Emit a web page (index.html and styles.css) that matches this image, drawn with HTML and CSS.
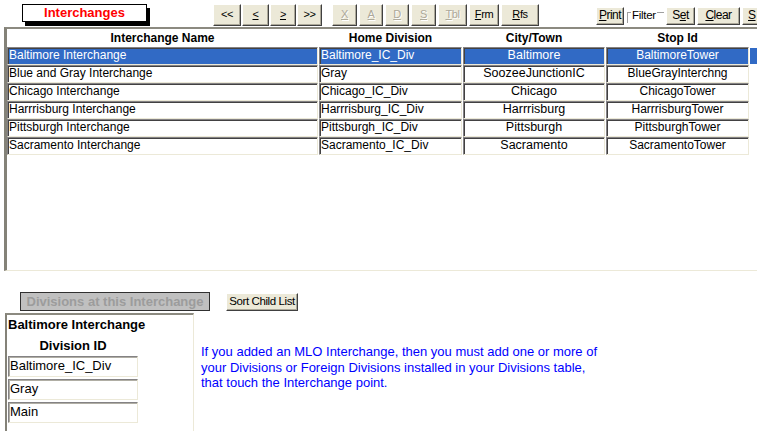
FILE: index.html
```html
<!DOCTYPE html>
<html>
<head>
<meta charset="utf-8">
<link rel="stylesheet" href="styles.css">
</head>
<body>
<div class="page">
  <div class="topbar">
    <div class="title">Interchanges</div>
    <div class="nav">
      <div class="btn w28">&lt;&lt;</div>
      <div class="btn w27"><u>&lt;</u></div>
      <div class="btn w26"><u>&gt;</u></div>
      <div class="btn w25">&gt;&gt;</div>
      <div class="btn dis w25 sep"><u>X</u></div>
      <div class="btn dis w24"><u>A</u></div>
      <div class="btn dis w24"><u>D</u></div>
      <div class="btn dis w25"><u>S</u></div>
      <div class="btn dis w29"><u>T</u>bl</div>
      <div class="btn w30"><u>F</u>rm</div>
      <div class="btn w38"><u>R</u>fs</div>
    </div>
    <div class="tools">
      <div class="btn small w28"><u>P</u>rint</div>
      <fieldset class="filter"><legend>Filter</legend></fieldset>
      <div class="btn small w29">S<u>e</u>t</div>
      <div class="btn small w43"><u>C</u>lear</div>
      <div class="btn small w30 left"><u>S</u></div>
    </div>
  </div>

  <div class="grid">
    <div class="head">Interchange Name</div>
    <div class="head">Home Division</div>
    <div class="head">City/Town</div>
    <div class="head">Stop Id</div>
    <div class="head"></div>

    <div class="cell sel">Baltimore Interchange</div>
    <div class="cell sel">Baltimore_IC_Div</div>
    <div class="cell sel ctr big">Baltimore</div>
    <div class="cell sel ctr">BaltimoreTower</div>
    <div class="marker on"></div>

    <div class="cell">Blue and Gray Interchange</div>
    <div class="cell">Gray</div>
    <div class="cell ctr big">SoozeeJunctionIC</div>
    <div class="cell ctr">BlueGrayInterchng</div>
    <div class="marker"></div>

    <div class="cell">Chicago Interchange</div>
    <div class="cell">Chicago_IC_Div</div>
    <div class="cell ctr big">Chicago</div>
    <div class="cell ctr">ChicagoTower</div>
    <div class="marker"></div>

    <div class="cell">Harrrisburg Interchange</div>
    <div class="cell">Harrrisburg_IC_Div</div>
    <div class="cell ctr big">Harrrisburg</div>
    <div class="cell ctr">HarrrisburgTower</div>
    <div class="marker"></div>

    <div class="cell">Pittsburgh Interchange</div>
    <div class="cell">Pittsburgh_IC_Div</div>
    <div class="cell ctr big">Pittsburgh</div>
    <div class="cell ctr">PittsburghTower</div>
    <div class="marker"></div>

    <div class="cell">Sacramento Interchange</div>
    <div class="cell">Sacramento_IC_Div</div>
    <div class="cell ctr big">Sacramento</div>
    <div class="cell ctr">SacramentoTower</div>
    <div class="marker"></div>
  </div>

  <div class="childbar">
    <div class="childlabel">Divisions at this Interchange</div>
    <div class="btn sortbtn">Sort Child List</div>
  </div>

  <div class="childrow">
    <div class="child">
      <div class="childtitle">Baltimore Interchange</div>
      <div class="childhead">Division ID</div>
      <div class="ccell">Baltimore_IC_Div</div>
      <div class="ccell">Gray</div>
      <div class="ccell">Main</div>
    </div>
    <p class="note">If you added an MLO Interchange, then you must add one or more of<br>your Divisions or Foreign Divisions installed in your Divisions table,<br>that touch the Interchange point.</p>
  </div>
</div>
</body>
</html>
```

FILE: styles.css
```css
html, body {
  margin: 0;
  padding: 0;
  background: #ffffff;
}
body {
  width: 757px;
  height: 431px;
  overflow: hidden;
  font-family: "Liberation Sans", Arial, sans-serif;
  font-size: 12px;
  color: #000;
}
.page {
  width: 757px;
  height: 431px;
  overflow: hidden;
}

/* top bar */
.topbar {
  display: flex;
  align-items: flex-start;
  height: 27px;
  width: 800px;
}
.topbar > * { flex: none; }
.title {
  margin: 4px 0 0 22px;
  width: 125px;
  height: 18px;
  box-sizing: border-box;
  border: 1px solid #000;
  background: #fff;
  box-shadow: 3px 4px 0 #000;
  color: #ff0000;
  font-weight: bold;
  font-size: 13px;
  line-height: 16px;
  text-align: center;
}
.nav {
  display: flex;
  gap: 1px;
  margin: 4px 0 0 66px;
}
.nav .sep { margin-left: 9px; }
.nav .dis ~ .btn, .nav .sep ~ .btn { margin-left: 1px; }
.btn {
  box-sizing: border-box;
  height: 22px;
  background: #ece9d8;
  border: 1px solid;
  border-color: #ffffff #404040 #404040 #ffffff;
  box-shadow: inset -1px -1px 0 #aca899;
  font-family: "Liberation Sans", sans-serif;
  font-size: 11px;
  letter-spacing: -0.4px;
  line-height: 19px;
  text-align: center;
  color: #000;
  flex: none;
  white-space: nowrap;
  overflow: hidden;
}
.btn.dis {
  color: #aca899;
  text-shadow: 1px 1px 0 #fff;
}
.btn.small {
  height: 18px;
  line-height: 15px;
  font-size: 12px;
  letter-spacing: -0.5px;
}
.btn.left { text-align: left; padding-left: 5px; }
.w24 { width: 24px; }
.w25 { width: 25px; }
.w26 { width: 26px; }
.w27 { width: 27px; }
.w28 { width: 28px; }
.w29 { width: 29px; }
.w30 { width: 30px; }
.w38 { width: 38px; margin-left: 1px; }
.w43 { width: 43px; }

.tools {
  display: flex;
  align-items: flex-start;
  gap: 2px;
  margin: 7px 0 0 57px;
}
.filter {
  margin: -4px 0 0 1px;
  padding: 0 0 2px 0;
  width: 37px;
  box-sizing: border-box;
  border: 0;
  border-top: 1px solid #a0a0a0;
  border-left: 1px solid #a0a0a0;
  flex: none;
}
.filter legend {
  padding: 7px 1px 0 1px;
  margin-left: 3px;
  font-family: "Liberation Sans", sans-serif;
  font-size: 11.5px;
  letter-spacing: -0.3px;
  line-height: 11px;
}

/* main grid */
.grid {
  margin-left: 4px;
  width: 770px;
  height: 244px;
  box-sizing: border-box;
  border-left: 3px solid #848278;
  border-top: 2px solid #8c8a80;
  border-bottom: 1px solid #ece9d8;
  display: grid;
  grid-template-columns: 311px 143px 142px 143px 12px;
  grid-auto-rows: 18px;
  column-gap: 1px;
  align-content: start;
}
.head {
  font-weight: bold;
  text-align: center;
  line-height: 18px;
  white-space: nowrap;
}
.cell {
  box-sizing: border-box;
  height: 18px;
  border: 1px solid;
  border-color: #848284 #ece9d8 #ece9d8 #848284;
  box-shadow: inset 1px 1px 0 #424142;
  line-height: 15px;
  padding-left: 1px;
  white-space: nowrap;
  overflow: hidden;
  background: #fff;
}
.cell.ctr { text-align: center; padding-left: 0; }
.cell.big { font-size: 12.5px; }
.cell.sel {
  background: #316ac5;
  color: #fff;
}
.marker { height: 18px; }
.marker.on {
  background: #316ac5;
  margin: 1px 0 1px 0;
  height: 16px;
}

/* child bar */
.childbar {
  display: flex;
  align-items: flex-start;
  margin-top: 21px;
  height: 19px;
}
.childlabel {
  margin-left: 20px;
  width: 190px;
  height: 19px;
  box-sizing: border-box;
  border: 1px solid #303030;
  background: #c0c0c0;
  color: #9c9c9c;
  font-weight: bold;
  font-size: 13px;
  line-height: 17px;
  text-align: center;
  white-space: nowrap;
  flex: none;
}
.sortbtn {
  margin: 1px 0 0 16px;
  width: 72px;
  height: 18px;
  font-size: 11.5px;
  letter-spacing: -0.4px;
  line-height: 15px;
}

/* child area */
.childrow {
  display: flex;
  align-items: flex-start;
  margin-top: 2px;
}
.child {
  margin-left: 5px;
  width: 189px;
  height: 130px;
  box-sizing: border-box;
  border-left: 2px solid #848278;
  border-top: 2px solid #8c8a80;
  border-right: 1px solid #ece9d8;
  padding: 2px 0 0 1px;
  flex: none;
}
.childtitle {
  font-weight: bold;
  font-size: 13px;
  line-height: 15px;
  white-space: nowrap;
}
.childhead {
  width: 130px;
  text-align: center;
  font-weight: bold;
  font-size: 13px;
  line-height: 15px;
  margin-top: 6px;
  margin-bottom: 3px;
}
.ccell {
  box-sizing: border-box;
  width: 130px;
  height: 21px;
  margin-bottom: 2px;
  border: 1px solid;
  border-color: #848284 #ece9d8 #ece9d8 #848284;
  box-shadow: inset 1px 1px 0 #b0aea4;
  font-size: 13px;
  line-height: 18px;
  padding-left: 1px;
  white-space: nowrap;
}
.note {
  margin: 31px 0 0 7px;
  color: #0000ff;
  font-size: 13px;
  line-height: 15.5px;
  white-space: nowrap;
}
```
